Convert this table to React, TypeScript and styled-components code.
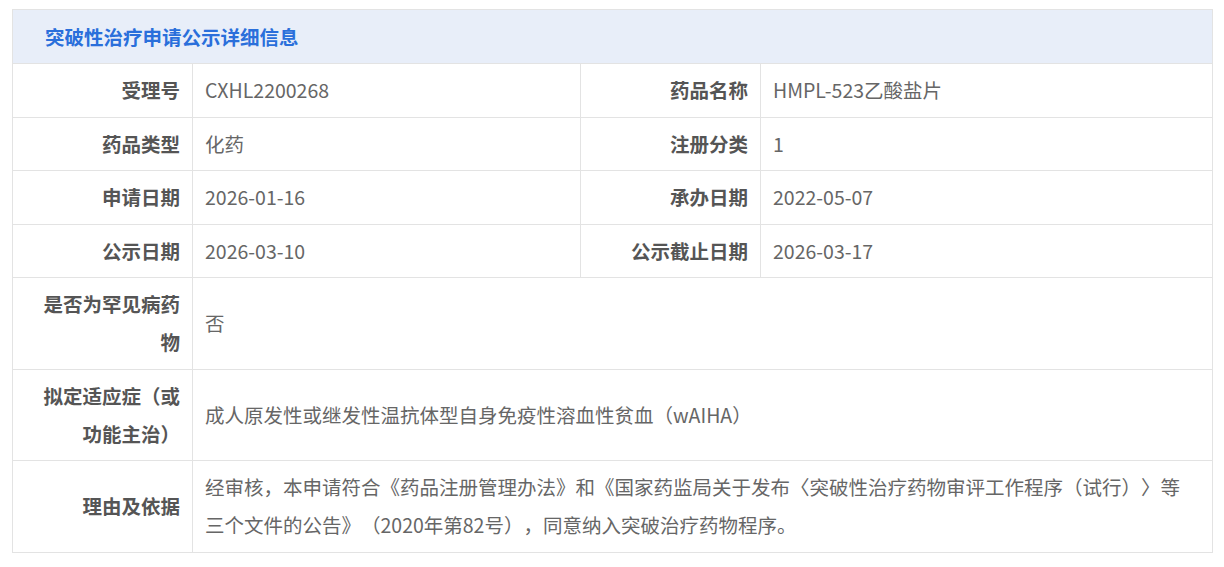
import React from "react";
import styled, { createGlobalStyle } from "styled-components";

const Global = createGlobalStyle`
  html, body { margin: 0; padding: 0; background: #ffffff; }
  body { font-family: "Noto Sans CJK SC", "Noto Sans", sans-serif; }
`;

const Page = styled.div`
  padding: 9px 12px 0 12px;
`;

const Table = styled.table`
  width: 1200px;
  border-collapse: collapse;
  table-layout: fixed;
  font-size: 19.5px;
  line-height: 38px;
  text-spacing-trim: space-all;
`;

const HeaderCell = styled.th`
  background: #e8eef9;
  color: #2a6fdb;
  font-weight: 700;
  text-align: left;
  padding: 7.5px 12px 7.5px 32px;
  border: 1px solid #e3e3e3;
`;

const Label = styled.th`
  color: #555555;
  font-weight: 700;
  text-align: right;
  padding: 7.25px 12px 7.25px 20px;
  border: 1px solid #e3e3e3;
  vertical-align: middle;
`;

const Value = styled.td`
  color: #666666;
  font-weight: 400;
  text-align: left;
  padding: 7.25px 20px 7.25px 12px;
  border: 1px solid #e3e3e3;
  vertical-align: middle;
`;

const pairs: [string, string, string, string][] = [
  ["受理号", "CXHL2200268", "药品名称", "HMPL-523乙酸盐片"],
  ["药品类型", "化药", "注册分类", "1"],
  ["申请日期", "2026-01-16", "承办日期", "2022-05-07"],
  ["公示日期", "2026-03-10", "公示截止日期", "2026-03-17"],
];

const wide: [string, string][] = [
  ["是否为罕见病药物", "否"],
  ["拟定适应症（或功能主治）", "成人原发性或继发性温抗体型自身免疫性溶血性贫血（wAIHA）"],
  [
    "理由及依据",
    "经审核，本申请符合《药品注册管理办法》和《国家药监局关于发布〈突破性治疗药物审评工作程序（试行）〉等三个文件的公告》（2020年第82号），同意纳入突破治疗药物程序。",
  ],
];

export default function App() {
  return (
    <Page>
      <Global />
      <Table>
        <colgroup>
          <col style={{ width: 180 }} />
          <col style={{ width: 388 }} />
          <col style={{ width: 180 }} />
          <col style={{ width: 452 }} />
        </colgroup>
        <thead>
          <tr>
            <HeaderCell colSpan={4}>突破性治疗申请公示详细信息</HeaderCell>
          </tr>
        </thead>
        <tbody>
          {pairs.map(([l1, v1, l2, v2]) => (
            <tr key={l1}>
              <Label>{l1}</Label>
              <Value>{v1}</Value>
              <Label>{l2}</Label>
              <Value>{v2}</Value>
            </tr>
          ))}
          {wide.map(([l, v]) => (
            <tr key={l}>
              <Label>{l}</Label>
              <Value colSpan={3}>{v}</Value>
            </tr>
          ))}
        </tbody>
      </Table>
    </Page>
  );
}
